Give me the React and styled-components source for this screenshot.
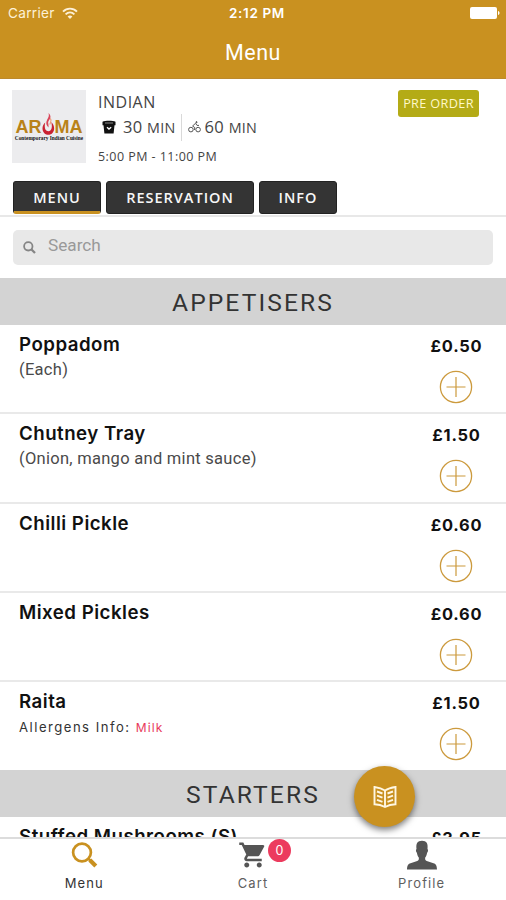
import React, { useState } from 'react';
import styled, { createGlobalStyle } from 'styled-components';
import { MdShoppingCart } from 'react-icons/md';

const gold = '#c99120';

const GlobalStyle = createGlobalStyle`
  * {
    box-sizing: border-box;
  }

  body {
    margin: 0;
    background: #fff;
    font-family: Inter, 'Liberation Sans', sans-serif;
    color: #151515;
  }

  button {
    font-family: inherit;
    border: 0;
    padding: 0;
    background: none;
  }
`;

const Screen = styled.div`
  position: relative;
  display: flex;
  flex-direction: column;
  height: 900px;
  overflow: hidden;
`;

const Header = styled.header`
  flex: none;
  height: 79px;
  background: ${gold};
  border-bottom: 1px solid #bd8a2c;
  color: #fff;
`;

const StatusBar = styled.div`
  display: grid;
  grid-template-columns: 1fr auto 1fr;
  align-items: center;
  height: 26px;
  padding: 0 6px 0 8px;
  font-size: 13px;
`;

const Carrier = styled.div`
  display: flex;
  align-items: center;
  gap: 7px;
  font-size: 13.6px;
  letter-spacing: 0.3px;
  color: #fdf1d8;
`;

const Clock = styled.div`
  font-weight: 600;
  font-size: 13.5px;
  letter-spacing: 0.65px;
  padding-left: 6px;
`;

const Battery = styled.svg`
  justify-self: end;
`;

const Title = styled.h1`
  margin: 0;
  font-size: 21.5px;
  font-weight: 400;
  line-height: 54px;
  text-align: center;
  font-family: Roboto, sans-serif;
  letter-spacing: 0.5px;
`;

const Restaurant = styled.section`
  display: flex;
  flex: none;
  height: 102px;
  padding: 11px 27px 0 12px;
  font-family: 'Open Sans', sans-serif;
`;

const Logo = styled.div`
  display: flex;
  flex-direction: column;
  align-items: center;
  width: 74px;
  height: 73px;
  padding-top: 21px;
  background: #ececee;
`;

const LogoName = styled.div`
  display: flex;
  align-items: flex-end;
  height: 25px;
  font-family: 'Liberation Sans', sans-serif;
  font-size: 18px;
  font-weight: 700;
  line-height: 17px;
  color: #b98219;
`;

const LogoTagline = styled.div`
  font-family: 'Liberation Serif', serif;
  font-size: 5.3px;
  font-weight: 700;
  line-height: 5px;
  white-space: nowrap;
  color: #111;
`;

const Details = styled.div`
  flex: 1;
  padding-left: 12px;
  color: #444;
`;

const Cuisine = styled.div`
  font-size: 16px;
  line-height: 24px;
  letter-spacing: 0.5px;
`;

const Times = styled.div`
  display: flex;
  align-items: center;
  height: 26px;
  font-size: 16.5px;
  letter-spacing: 0.3px;
  white-space: nowrap;

  small {
    font-size: 14.3px;
  }
`;

const Duration = styled.span`
  display: flex;
  align-items: center;
  gap: ${(props) => props.$gap};
  padding: ${(props) => props.$padding};
  border-left: ${(props) => (props.$divided ? '1px solid #d9d9d9' : '0')};
  line-height: 26px;
`;

const Hours = styled.div`
  margin-top: 6px;
  font-size: 12.5px;
  line-height: 21px;
  letter-spacing: 0.45px;
`;

const PreOrder = styled.span`
  width: 81px;
  height: 27px;
  border-radius: 3px;
  background: #b4ab16;
  color: #fff9c8;
  font-size: 12.7px;
  font-weight: 500;
  line-height: 27px;
  letter-spacing: 0.35px;
  text-align: center;
  white-space: nowrap;
`;

const Tabs = styled.nav`
  display: flex;
  flex: none;
  gap: 5px;
  height: 36px;
  padding: 0 13px;
  border-bottom: 2px solid #e8e8e8;
`;

const Tab = styled.button`
  width: ${(props) => props.$width}px;
  height: 33px;
  border-radius: 3px;
  border: 1px solid #222;
  border-bottom: ${(props) => (props.$active ? `3px solid ${gold}` : '1px solid #222')};
  background: #343434;
  color: #f7f7f7;
  font-family: 'Open Sans', sans-serif;
  font-size: 14.5px;
  font-weight: 650;
  line-height: 29px;
  letter-spacing: 1px;
  display: flex;
  justify-content: center;
  align-items: flex-start;
  padding-top: 1px;
`;

const SearchBox = styled.label`
  display: flex;
  flex: none;
  align-items: center;
  gap: 12px;
  height: 35px;
  margin: 13px 13px 13px;
  padding: 0 10px;
  border-radius: 5px;
  background: #e8e8e8;
`;

const SearchInput = styled.input`
  flex: 1;
  height: 24px;
  margin-top: -6px;
  padding: 0;
  border: 0;
  outline: 0;
  background: transparent;
  color: #333;
  font-family: Roboto, sans-serif;
  font-size: 17.2px;

  &::placeholder {
    color: #999;
    opacity: 1;
  }
`;

const MenuList = styled.main`
  flex: 1;
  min-height: 0;
  overflow: hidden;
`;

const SectionTitle = styled.h2`
  height: 47px;
  margin: 0;
  background: #d3d3d3;
  color: #333;
  font-family: Roboto, sans-serif;
  font-size: 24.6px;
  font-weight: 400;
  line-height: 49px;
  letter-spacing: 2.1px;
  text-align: center;
`;

const Item = styled.article`
  display: flex;
  justify-content: space-between;
  height: ${(props) => (props.$last ? '88.25px' : '89.25px')};
  padding: 7px 24px 0 19px;
  border-bottom: ${(props) => (props.$last ? '0' : '2px solid #e9e9e9')};
`;

const ItemName = styled.h3`
  margin: 0;
  font-size: 18.7px;
  font-weight: 600;
  line-height: 25px;
  letter-spacing: 0.48px;
  color: #111;
`;

const Description = styled.p`
  margin: 0;
  font-family: Roboto, sans-serif;
  font-size: 16.5px;
  line-height: 26px;
  letter-spacing: 0.28px;
  color: #4a4a4a;
`;

const Allergens = styled.p`
  margin: 0;
  font-size: 13.1px;
  line-height: 27px;
  letter-spacing: 1.5px;
  color: #333;

  span {
    font-size: 12px;
    letter-spacing: 1.1px;
    color: #e8395b;
  }
`;

const Buy = styled.div`
  display: flex;
  flex-direction: column;
  align-items: center;
  flex: none;
  width: 51px;
`;

const Price = styled.div`
  font-size: 16.4px;
  font-weight: 650;
  line-height: 29px;
  letter-spacing: 0.8px;
  white-space: nowrap;
  color: #111;
`;

const AddButton = styled.button`
  width: 34px;
  height: 34px;
  margin-top: 9px;
  margin-right: 2px;
`;

const BrowseButton = styled.button`
  position: absolute;
  left: 354px;
  top: 766px;
  display: flex;
  align-items: center;
  justify-content: center;
  width: 61px;
  height: 61px;
  border-radius: 50%;
  background: ${gold};
  box-shadow: 0 3px 6px rgba(0, 0, 0, 0.5);
`;

const BottomBar = styled.nav`
  position: relative;
  display: grid;
  grid-template-columns: repeat(3, 1fr);
  flex: none;
  height: 63px;
  border-top: 2px solid #dcdcdc;
  background: #fff;
`;

const BottomLink = styled.a`
  display: flex;
  flex-direction: column;
  align-items: center;
  font-size: 13px;
  letter-spacing: 1.1px;
  line-height: 18px;
  color: ${(props) => (props.$active ? '#333' : '#5f5f5f')};
`;

const IconSlot = styled.span`
  position: relative;
  display: flex;
  justify-content: center;
  align-items: center;
  width: 32px;
  height: 32px;
  margin-bottom: 3px;
`;

const CartCount = styled.span`
  position: absolute;
  left: 31px;
  top: 0;
  width: 23px;
  height: 23px;
  border-radius: 50%;
  background: #ec3b5e;
  color: #fff;
  font-size: 12.5px;
  line-height: 23px;
  letter-spacing: 0;
  text-align: center;
`;

const WifiIcon = () => (
  <svg width="16" height="13" viewBox="0 0 16 13" fill="none" stroke="#fdf1d8" strokeWidth="1.9">
    <path d="M1 4.6C5 .6 11 .6 15 4.6" />
    <path d="M3.6 7.4C6.2 4.9 9.8 4.9 12.4 7.4" />
    <path d="M8 12 5.6 9.4c1.4-1.3 3.4-1.3 4.8 0z" fill="#fdf1d8" stroke="none" />
  </svg>
);

const FlameIcon = () => (
  <svg width="13" height="23" viewBox="0 0 14 24" preserveAspectRatio="none">
    <path
      d="M7 0c4 4 1.500 6 0 8.500-1 1.800.5 3 0 6.500-2.500-2-3.200-5-1.500-8C7 4.500 8 3 7 0z"
      fill="#d9455a"
    />
    <path
      d="M3.500 10C0 13-.5 18 2.500 21c2.700 2.500 6.800 2.200 9-.5C14 17.500 13.500 13 10 9.500c1 4 1.200 9-3 9.500-4 .2-4.700-4.500-3.500-9z"
      fill="#c92232"
    />
    <path d="M9 5.500c2 2.500 0 4-.5 6.500" stroke="#ef9a75" strokeWidth="1.200" fill="none" />
  </svg>
);

const TakeawayIcon = () => (
  <svg width="14" height="14" viewBox="0 0 14 14">
    <path d="M.5 1.800C3 .4 11 .4 13.500 1.800v3.400h-1L11.600 13.500H2.400L1.500 5.200h-1z" fill="#111" />
    <path d="M3 3h8" stroke="#999" strokeWidth=".9" />
    <path d="m5 7.300 2 1.700 2.200-1.700" stroke="#fff" strokeWidth="1.400" fill="none" />
  </svg>
);

const BikeIcon = () => (
  <svg width="13" height="12" viewBox="0 0 13 12" fill="none" stroke="#555" strokeWidth="1">
    <circle cx="2.900" cy="8.600" r="2.300" />
    <circle cx="10.100" cy="8.600" r="2.300" />
    <path d="m6.500 9 .3-2.400L4.600 5l2.900-2.700L9 4.400h2" />
    <circle cx="8.500" cy="1.200" r=".6" fill="#555" />
  </svg>
);

const SmallSearchIcon = () => (
  <svg width="13" height="13" viewBox="0 0 13 13" fill="none" stroke="#858585">
    <circle cx="5.300" cy="5.300" r="4.200" strokeWidth="1.800" />
    <path d="m8.300 8.300 3.700 3.700" strokeWidth="2.300" />
  </svg>
);

const PlusIcon = () => (
  <svg width="34" height="34" viewBox="0 0 34 34" fill="none" stroke="#cc9a3d">
    <circle cx="17" cy="17" r="15.600" strokeWidth="1.300" />
    <path d="M17 7v20M7.500 17h19" strokeWidth="1.200" />
  </svg>
);

const BookIcon = () => (
  <svg width="24" height="24" viewBox="0 0 24 24" fill="none" stroke="#fff7e2" strokeWidth="1.900">
    <path d="M1.500 2C5 2.500 9 3.500 12 5.500c3-2 7-3 10.500-3.500v17.200c-3.500 0-7.500 1-10.500 2.800-3-1.800-7-2.800-10.500-2.800z" />
    <path d="M12 5.500V22M4 6.500l5.500 2M4 10.700l5.500 2M4 14.900l5.500 2M20 6.500l-5.500 2M20 10.700l-5.500 2M20 14.900l-5.500 2" />
  </svg>
);

const MenuIcon = () => (
  <svg width="28" height="28" viewBox="0 0 28 28" fill="none" stroke={gold}>
    <circle cx="12" cy="11.500" r="8.900" strokeWidth="2.700" />
    <path d="m18 17.500 2.500 2" strokeWidth="2.500" />
    <path d="m19.800 19 6 6" strokeWidth="4.200" />
  </svg>
);

const PersonIcon = () => (
  <svg width="32" height="30" viewBox="0 0 32 30" fill="#555">
    <path d="M1 29.500c.2-4 1-5.500 3.500-6.300l6-2c2-.7 2.700-1.500 2.300-3.700-1.200-1.200-1.600-3-1.900-4.700-1-.5-1.300-3.400-.4-3.800C9.900 3.500 11.300.8 16 .8S22.100 3.500 21.500 9c.9.400.6 3.300-.4 3.800-.3 1.700-.7 3.500-1.900 4.700-.4 2.200.3 3 2.300 3.700l6 2c2.500.8 3.300 2.300 3.500 6.300z" />
  </svg>
);

const tabs = [
  { label: 'MENU', width: 88 },
  { label: 'RESERVATION', width: 148 },
  { label: 'INFO', width: 78 }
];

const appetisers = [
  { name: 'Poppadom', description: '(Each)', price: '£0.50' },
  { name: 'Chutney Tray', description: '(Onion, mango and mint sauce)', price: '£1.50' },
  { name: 'Chilli Pickle', price: '£0.60' },
  { name: 'Mixed Pickles', price: '£0.60' },
  { name: 'Raita', allergens: 'Milk', price: '£1.50' }
];

const starters = [{ name: 'Stuffed Mushrooms (S)', price: '£3.95' }];

const MenuItem = ({ item, last }) => (
  <Item $last={last}>
    <div>
      <ItemName>{item.name}</ItemName>
      {item.description && <Description>{item.description}</Description>}
      {item.allergens && (
        <Allergens>
          Allergens Info: <span>{item.allergens}</span>
        </Allergens>
      )}
    </div>
    <Buy>
      <Price>{item.price}</Price>
      <AddButton aria-label="Add">
        <PlusIcon />
      </AddButton>
    </Buy>
  </Item>
);

const App = () => {
  const [activeTab, setActiveTab] = useState('MENU');
  const [search, setSearch] = useState('');

  return (
    <Screen>
      <GlobalStyle />
      <Header>
        <StatusBar>
          <Carrier>
            Carrier <WifiIcon />
          </Carrier>
          <Clock>2:12 PM</Clock>
          <Battery width="30" height="12" viewBox="0 0 30 12" fill="#fff">
            <rect width="27" height="12" rx="2" />
            <path d="M28 4c2 .5 2 3.500 0 4z" />
          </Battery>
        </StatusBar>
        <Title>Menu</Title>
      </Header>

      <Restaurant>
        <Logo>
          <LogoName>
            AR
            <FlameIcon />
            MA
          </LogoName>
          <LogoTagline>Contemporary Indian Cuisine</LogoTagline>
        </Logo>
        <Details>
          <Cuisine>INDIAN</Cuisine>
          <Times>
            <Duration $gap="7px" $padding="0 5px 0 4px">
              <TakeawayIcon />
              <span>30 <small>MIN</small></span>
            </Duration>
            <Duration $gap="4px" $padding="0 0 0 6px" $divided>
              <BikeIcon />
              <span>60 <small>MIN</small></span>
            </Duration>
          </Times>
          <Hours>5:00 PM - 11:00 PM</Hours>
        </Details>
        <PreOrder>PRE ORDER</PreOrder>
      </Restaurant>

      <Tabs>
        {tabs.map((tab) => (
          <Tab
            key={tab.label}
            $width={tab.width}
            $active={activeTab === tab.label}
            onClick={() => setActiveTab(tab.label)}
          >
            {tab.label}
          </Tab>
        ))}
      </Tabs>

      <SearchBox>
        <SmallSearchIcon />
        <SearchInput
          placeholder="Search"
          value={search}
          onChange={(e) => setSearch(e.target.value)}
        />
      </SearchBox>

      <MenuList>
        <SectionTitle>APPETISERS</SectionTitle>
        {appetisers.map((item, i) => (
          <MenuItem key={item.name} item={item} last={i === appetisers.length - 1} />
        ))}
        <SectionTitle>STARTERS</SectionTitle>
        {starters.map((item) => (
          <MenuItem key={item.name} item={item} />
        ))}
      </MenuList>

      <BrowseButton aria-label="Browse menu">
        <BookIcon />
      </BrowseButton>

      <BottomBar>
        <BottomLink $active>
          <IconSlot>
            <MenuIcon />
          </IconSlot>
          Menu
        </BottomLink>
        <BottomLink>
          <IconSlot>
            <MdShoppingCart size={30} color="#555" />
            <CartCount>0</CartCount>
          </IconSlot>
          Cart
        </BottomLink>
        <BottomLink>
          <IconSlot>
            <PersonIcon />
          </IconSlot>
          Profile
        </BottomLink>
      </BottomBar>
    </Screen>
  );
};

export default App;
